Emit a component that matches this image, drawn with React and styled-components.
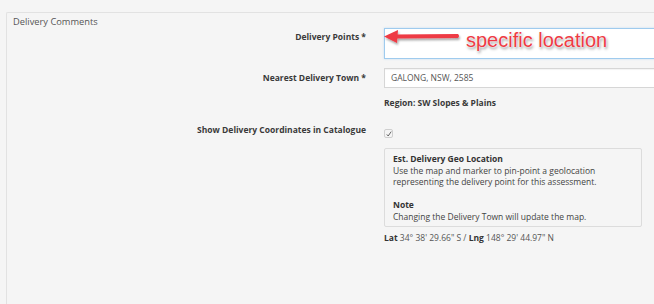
import React from "react";
import styled, { createGlobalStyle } from "styled-components";

const Global = createGlobalStyle`
  html, body { margin: 0; padding: 0; }
  body {
    background: #f5f5f5;
    font-family: "Open Sans", "Noto Sans", sans-serif;
    font-size: 8.5px;
    color: #333;
    overflow: hidden;
    width: 654px;
    height: 304px;
  }
`;

const Page = styled.div`
  padding: 12px 0 0 6px;
  height: 304px;
  width: 654px;
  box-sizing: border-box;
  overflow: hidden;
`;

const Panel = styled.fieldset`
  margin: 0;
  padding: 0;
  border: 1px solid #e2e2e2;
  border-right: none;
  border-bottom: none;
  border-top-left-radius: 2px;
  height: 100%;
  box-sizing: border-box;
  width: 648px;
  min-width: 0;
`;

const Legend = styled.div`
  padding: 3px 0 0 6px;
  font-size: 9.3px;
  line-height: 12px;
  color: #555;
`;

const Row = styled.div`
  display: grid;
  grid-template-columns: 359px 1fr;
  column-gap: 18px;
  margin-top: ${(p) => p.$mt || 0}px;
`;

const Label = styled.div`
  text-align: right;
  font-weight: 700;
  line-height: 12px;
  color: #3a3a3a;
  padding-top: ${(p) => p.$pt || 0}px;
`;

const Control = styled.div`
  position: relative;
  display: flex;
  flex-direction: column;
  align-items: flex-start;
  min-width: 0;
`;

const TextArea = styled.div`
  width: 290px;
  height: 31px;
  box-sizing: border-box;
  background: #fff;
  border: 1px solid #9fcbee;
  box-shadow: 0 0 2px rgba(102, 175, 233, 0.35);
`;

const Input = styled.div`
  width: 290px;
  height: 20px;
  box-sizing: border-box;
  background: #fff;
  border: 1px solid #d6d6d6;
  box-shadow: inset 0 1px 1px rgba(0, 0, 0, 0.05);
  padding-left: 6px;
  line-height: 18px;
  color: #555;
`;

const Region = styled.div`
  margin-top: 9px;
  font-weight: 700;
  line-height: 12px;
  color: #3a3a3a;
`;

const Check = styled.span`
  margin-top: 5px;
  width: 9px;
  height: 9px;
  box-sizing: border-box;
  border: 1px solid #cfcfcf;
  border-radius: 2px;
  background: #f4f4f4;
  display: flex;
  align-items: center;
  justify-content: center;
`;

const InfoBox = styled.div`
  margin-top: 10px;
  width: 258px;
  box-sizing: border-box;
  border: 1px solid #dcdcdc;
  border-radius: 2px;
  padding: 4px 8px 4px 8px;
  line-height: 11.5px;
  color: #444;
`;

const Para = styled.p`
  margin: 0;
  & + & { margin-top: 11.5px; }
`;

const Strong = styled.b`
  font-weight: 700;
  color: #333;
`;

const Coords = styled.div`
  margin-top: 5px;
  line-height: 12px;
  color: #555;
`;

const ArrowSvg = styled.svg`
  position: absolute;
  left: -1px;
  top: 0;
  overflow: visible;
`;

const Callout = styled.span`
  position: absolute;
  left: 82px;
  top: 3px;
  font-family: "Liberation Sans", Arial, sans-serif;
  font-size: 20px;
  line-height: 19px;
  color: #ee3a44;
  white-space: nowrap;
  text-shadow: 0 0 1px #fff, 0 0 2px #fff, 1px 2px 3px rgba(0, 0, 0, 0.45);
`;

export default function App() {
  return (
    <>
      <Global />
      <Page>
        <Panel>
          <Legend>Delivery Comments</Legend>
          <Row>
            <Label $pt={3}>Delivery Points *</Label>
            <Control>
              <TextArea />
              <ArrowSvg width="80" height="20">
                <defs>
                  <filter id="sh" x="-20%" y="-50%" width="140%" height="200%">
                    <feDropShadow dx="1" dy="2" stdDeviation="1.2" floodColor="#000" floodOpacity="0.35" />
                  </filter>
                </defs>
                <g filter="url(#sh)">
                  <path d="M1 8.5 L15 2 L14 15 Z" fill="#ee3a44" />
                  <path d="M12 6.5 L75 6 Q77 8 75 10 L12 10.5 Z" fill="#ee3a44" />
                </g>
              </ArrowSvg>
              <Callout>specific location</Callout>
            </Control>
          </Row>
          <Row $mt={9}>
            <Label $pt={4}>Nearest Delivery Town *</Label>
            <Control>
              <Input>GALONG, NSW, 2585</Input>
              <Region>Region: SW Slopes &amp; Plains</Region>
            </Control>
          </Row>
          <Row $mt={15}>
            <Label>Show Delivery Coordinates in Catalogue</Label>
            <Control>
              <Check>
                <svg width="6" height="6" viewBox="0 0 6 6">
                  <path d="M0.8 3.4 L2.2 5 L5.2 0.6" fill="none" stroke="#555" strokeWidth="0.9" />
                </svg>
              </Check>
              <InfoBox>
                <Para>
                  <Strong>Est. Delivery Geo Location</Strong>
                  <br />
                  Use the map and marker to pin-point a geolocation representing the delivery point for this assessment.
                </Para>
                <Para>
                  <Strong>Note</Strong>
                  <br />
                  Changing the Delivery Town will update the map.
                </Para>
              </InfoBox>
              <Coords>
                <Strong>Lat</Strong> 34° 38' 29.66" S / <Strong>Lng</Strong> 148° 29' 44.97" N
              </Coords>
            </Control>
          </Row>
        </Panel>
      </Page>
    </>
  );
}
